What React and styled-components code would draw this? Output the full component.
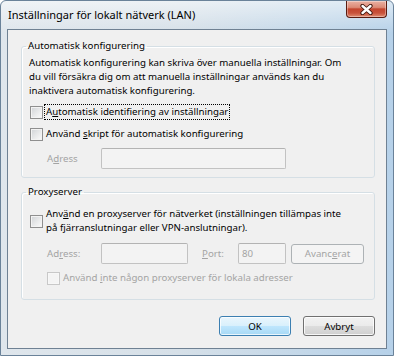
import React from 'react';
import styled, { createGlobalStyle } from 'styled-components';

const GlobalStyle = createGlobalStyle`
  html, body {
    margin: 0;
    padding: 0;
    background: #ffffff;
  }
  body {
    font-family: "Noto Sans", sans-serif;
    -webkit-font-smoothing: antialiased;
  }
`;

// Fönsterram (Aero)
const Window = styled.div`
  width: 394px;
  height: 356px;
  box-sizing: border-box;
  display: flex;
  flex-direction: column;
  border: 1px solid #6a8299;
  border-radius: 6px 6px 0 0;
  background:
    linear-gradient(180deg, rgba(255, 255, 255, 0.55) 0%, rgba(255, 255, 255, 0) 9%),
    linear-gradient(90deg, #dfe6ec 0%, #d6e0e8 45%, #c2d7e9 80%, #b6d1e9 100%);
  overflow: hidden;
`;

const TitleBar = styled.div`
  height: 28px;
  flex: none;
  display: flex;
  justify-content: space-between;
  align-items: flex-start;
  padding-left: 7px;
`;

const Title = styled.div`
  padding-top: 7px;
  font-size: 11px;
  line-height: 14px;
  color: #000;
  white-space: nowrap;
`;

const CloseButton = styled.div`
  width: 41px;
  height: 17px;
  box-sizing: border-box;
  margin-right: 6px;
  border: 1px solid #5a1b10;
  border-top: none;
  border-radius: 0 0 4px 4px;
  background: linear-gradient(180deg, #eab1a3 0%, #dc8a76 40%, #c3452e 50%, #c8523b 75%, #e08d72 100%);
  box-shadow: inset 0 0 0 1px rgba(255, 255, 255, 0.35);
  display: flex;
  align-items: center;
  justify-content: center;
`;

const Client = styled.div`
  flex: 1;
  margin: 0 6px 6px 6px;
  box-sizing: border-box;
  border: 1px solid #6f8193;
  background: #f0f0f0;
  padding: 9px 11px 0 13px;
  display: flex;
  flex-direction: column;
  font-size: 9.7px;
  color: #000;
`;

const Group = styled.fieldset`
  margin: ${({ $first }) => ($first ? '0' : '7px 0 0 0')};
  padding: ${({ $pad }) => $pad};
  border: 1px solid #d5dfe5;
  border-radius: 3px;
  min-inline-size: 0;
  box-shadow: inset 1px 1px 0 #ffffff;
`;

const Legend = styled.legend`
  padding: 0 2px;
  margin-left: -3px;
  line-height: 14px;
  font-size: 9.7px;
`;

const Text = styled.div`
  line-height: 14px;
  white-space: nowrap;
`;

const Row = styled.div`
  display: flex;
  align-items: center;
  height: ${({ $h }) => $h || 16}px;
  margin-top: ${({ $mt }) => $mt || 0}px;
  padding-left: ${({ $indent }) => $indent || 0}px;
`;

const TopRow = styled.div`
  display: flex;
  align-items: center;
`;

const Box = styled.span`
  flex: none;
  width: 13px;
  height: 13px;
  box-sizing: border-box;
  margin-left: ${({ $ml }) => $ml ?? 1}px;
  border: 1px solid ${({ $disabled }) => ($disabled ? '#c8c8c8' : '#8f8f8f')};
  background: ${({ $disabled }) =>
    $disabled ? '#f4f4f4' : 'linear-gradient(135deg, #d0d3d6 0%, #e9eaeb 55%, #fbfbfb 100%)'};
  box-shadow: inset 0 0 0 1px ${({ $disabled }) => ($disabled ? '#f7f7f7' : '#f3f3f3')};
`;

const Label = styled.span`
  margin-left: 3px;
  line-height: 14px;
  white-space: nowrap;
  color: ${({ $disabled }) => ($disabled ? '#a4a4a4' : '#000')};
  ${({ $focus }) => ($focus ? 'outline: 1px dotted #000; outline-offset: 0; padding: 0 1px; margin-left: 2px;' : '')}
`;

const FieldLabel = styled.span`
  flex: none;
  width: ${({ $w }) => $w}px;
  margin-left: ${({ $ml }) => $ml || 0}px;
  color: #a4a4a4;
  white-space: nowrap;
`;

const Input = styled.div`
  flex: none;
  width: ${({ $w }) => $w}px;
  height: 21px;
  box-sizing: border-box;
  border: 1px solid #c2c2c2;
  border-top-color: #b3b3b3;
  border-radius: 2px;
  background: #f3f3f3;
  color: #a4a4a4;
  padding-left: 3px;
  display: flex;
  align-items: center;
`;

const U = styled.span`
  text-decoration: underline;
  text-underline-offset: 1px;
`;

const Button = styled.div`
  flex: none;
  width: ${({ $w }) => $w || 72}px;
  height: 20px;
  box-sizing: border-box;
  margin-left: ${({ $ml }) => $ml || 0}px;
  border-radius: 3px;
  display: flex;
  align-items: center;
  justify-content: center;
  white-space: nowrap;
  ${({ $variant }) =>
    $variant === 'default'
      ? `
    border: 1px solid #3c7fb1;
    background: linear-gradient(180deg, #eaf6fd 0%, #d9f0fc 48%, #bee6fd 52%, #a7d9f5 100%);
    box-shadow: inset 0 0 0 1px rgba(255,255,255,0.75);
    color: #000;
  `
      : $variant === 'disabled'
      ? `
    border: 1px solid #adb2b5;
    background: #f4f4f4;
    color: #a4a4a4;
  `
      : `
    border: 1px solid #707070;
    background: linear-gradient(180deg, #f2f2f2 0%, #ebebeb 48%, #dddddd 52%, #cfcfcf 100%);
    box-shadow: inset 0 0 0 1px rgba(255,255,255,0.8);
    color: #000;
  `}
`;

const Buttons = styled.div`
  display: flex;
  justify-content: flex-end;
  gap: 12px;
  margin-top: 16px;
`;

const CloseIcon = () => (
  <svg width="13" height="11" viewBox="0 0 13 11">
    <path d="M2.5 2 L10.5 9 M10.5 2 L2.5 9" stroke="#3b120a" strokeWidth="4.2" strokeLinecap="round" />
    <path d="M2.5 2 L10.5 9 M10.5 2 L2.5 9" stroke="#ffffff" strokeWidth="2.4" strokeLinecap="round" />
  </svg>
);

export default function App() {
  return (
    <>
      <GlobalStyle />
      <Window>
        <TitleBar>
          <Title>Inställningar för lokalt nätverk (LAN)</Title>
          <CloseButton>
            <CloseIcon />
          </CloseButton>
        </TitleBar>

        <Client>
          <Group $first $pad="3px 7px 8px 7px">
            <Legend>Automatisk konfigurering</Legend>
            <Text>
              Automatisk konfigurering kan skriva över manuella inställningar. Om
              <br />
              du vill försäkra dig om att manuella inställningar används kan du
              <br />
              inaktivera automatisk konfigurering.
            </Text>
            <Row $mt={6}>
              <Box />
              <Label $focus>
                A<U>u</U>tomatisk identifiering av inställningar
              </Label>
            </Row>
            <Row $mt={6}>
              <Box />
              <Label>
                Använd <U>s</U>kript för automatisk konfigurering
              </Label>
            </Row>
            <Row $mt={6} $h={21} $indent={18}>
              <FieldLabel $w={54}>
                A<U>d</U>ress
              </FieldLabel>
              <Input $w={185} />
            </Row>
          </Group>

          <Group $pad="8px 7px 13px 7px">
            <Legend>Proxyserver</Legend>
            <TopRow>
              <Box />
              <Label>
                Anv<U>ä</U>nd en proxyserver för nätverket (inställningen tillämpas inte
                <br />
                på fjärranslutningar eller VPN-anslutningar).
              </Label>
            </TopRow>
            <Row $mt={8} $h={21} $indent={18}>
              <FieldLabel $w={54}>
                Ad<U>r</U>ess:
              </FieldLabel>
              <Input $w={87} />
              <FieldLabel $w={36} $ml={14}>
                <U>P</U>ort:
              </FieldLabel>
              <Input $w={48}>80</Input>
              <Button $variant="disabled" $w={73} $ml={5}>
                Avanc<U>e</U>rat
              </Button>
            </Row>
            <Row $mt={6} $indent={18}>
              <Box $disabled $ml={0} />
              <Label $disabled>
                Använd <U>i</U>nte någon proxyserver för lokala adresser
              </Label>
            </Row>
          </Group>

          <Buttons>
            <Button $variant="default">OK</Button>
            <Button>Avbryt</Button>
          </Buttons>
        </Client>
      </Window>
    </>
  );
}
